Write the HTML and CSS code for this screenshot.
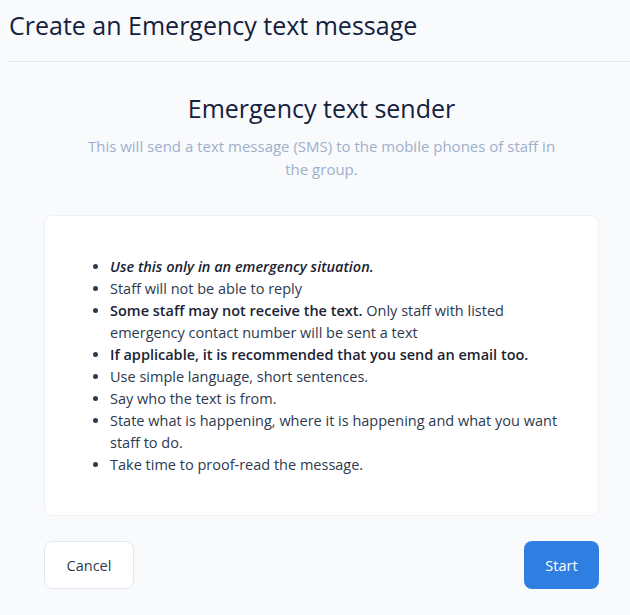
FILE: index.html
```html
<!DOCTYPE html>
<html lang="en">

<head>
    <meta charset="UTF-8">
    <meta name="viewport" content="width=device-width, initial-scale=1.0">
    <title>Create an Emergency text message</title>
    <link rel="stylesheet" href="styles.css">
</head>

<body>
    <div class="page-header">
        <h1>Create an Emergency text message</h1>
    </div>

    <div class="content">
        <div class="intro">
            <h2>Emergency text sender</h2>
            <p>This will send a text message (SMS) to the mobile phones of staff in the group.</p>
        </div>

        <div class="card">
            <ul class="rules">
                <li><strong><em>Use this only in an emergency situation.</em></strong></li>
                <li>Staff will not be able to reply</li>
                <li><strong>Some staff may not receive the text.</strong> Only staff with listed emergency contact number will be sent a text</li>
                <li><strong>If applicable, it is recommended that you send an email too.</strong></li>
                <li>Use simple language, short sentences.</li>
                <li>Say who the text is from.</li>
                <li>State what is happening, where it is happening and what you want staff to do.</li>
                <li>Take time to proof-read the message.</li>
            </ul>
        </div>

        <div class="actions">
            <button type="button" class="button button-light">Cancel</button>
            <button type="button" class="button button-primary">Start</button>
        </div>
    </div>
</body>

</html>
```

FILE: styles.css
```css
body {
    background-color: #f8fafc;
    color: #1e293b;
    font-family: "Open Sans", Arial, sans-serif;
    margin: 0;
    padding: 0;
}

.page-header {
    margin-left: 8px;
    padding: 8px 0 19px 1px;
    border-bottom: 1px solid #e2e8f0;
}

.page-header h1 {
    margin: 0;
    font-size: 25px;
    font-weight: 500;
    line-height: 34px;
    color: #14213d;
}

.content {
    padding: 0 31px 0 44px;
}

.intro {
    text-align: center;
    padding-top: 30px;
}

.intro h2 {
    margin: 0;
    font-size: 25px;
    font-weight: 500;
    line-height: 32px;
    color: #14213d;
}

.intro p {
    max-width: 476px;
    margin: 11px auto 0;
    font-size: 15px;
    line-height: 23px;
    color: #9fb0cc;
}

.card {
    margin-top: 34px;
    background-color: #fff;
    border: 1px solid #eef1f5;
    border-radius: 8px;
    padding: 40px 40px 39px 40px;
}

.rules {
    margin: 0;
    padding-left: 25px;
    font-size: 14.5px;
    line-height: 22px;
    color: #2d3a4f;
}

.rules strong {
    color: #1a2333;
    font-weight: 600;
}

.actions {
    display: flex;
    justify-content: space-between;
    margin-top: 25px;
}

.button {
    font-family: "Open Sans", Arial, sans-serif;
    font-size: 14.5px;
    height: 48px;
    border-radius: 8px;
    cursor: pointer;
}

.button-light {
    width: 90px;
    background-color: #fff;
    border: 1px solid #e2e8f0;
    color: #2d3a4f;
}

.button-primary {
    width: 75px;
    background-color: #2f7fe2;
    border: none;
    color: #fff;
}
```
